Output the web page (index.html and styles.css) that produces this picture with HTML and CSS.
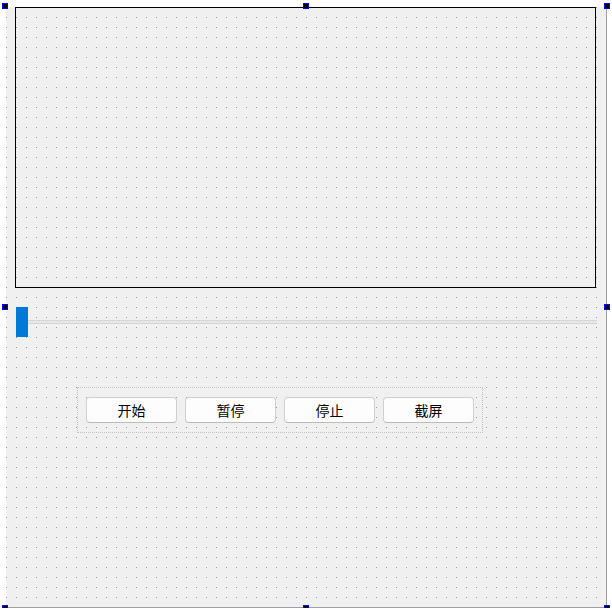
FILE: index.html
```html
<!DOCTYPE html>
<html>
<head>
<meta charset="utf-8">
<link rel="stylesheet" href="styles.css">
</head>
<body>
<div class="form">
  <div class="frame"></div>
  <div class="slider">
    <div class="groove"></div>
    <div class="knob"></div>
  </div>
  <div class="layout">
    <button class="btn">开始</button>
    <button class="btn">暂停</button>
    <button class="btn">停止</button>
    <button class="btn">截屏</button>
  </div>
  <span class="handle h-tl"></span>
  <span class="handle h-tm"></span>
  <span class="handle h-tr"></span>
  <span class="handle h-ml"></span>
  <span class="handle h-mr"></span>
  <span class="handle h-bl"></span>
  <span class="handle h-bm"></span>
  <span class="handle h-br"></span>
</div>
</body>
</html>
```
FILE: styles.css
```css
html, body {
  margin: 0;
  padding: 0;
  background: #ffffff;
}
body {
  font-family: "Noto Sans CJK SC", "Noto Sans", sans-serif;
}
.form {
  position: relative;
  margin: 7px 0 0 6px;
  width: 600px;
  height: 600px;
  background-color: #f0f0f0;
  background-image: conic-gradient(from 270deg at 1px 1px, #9c9c9c 25%, transparent 0);
  background-size: 10px 10px;
  border-right: 1px solid #a0a0a0;
  border-bottom: 1px solid #a0a0a0;
  display: flex;
  flex-direction: column;
  align-items: flex-start;
}
.frame {
  box-sizing: border-box;
  margin-left: 9px;
  width: 581px;
  height: 281px;
  border: 1px solid #000000;
}
.slider {
  position: relative;
  margin: 19px 0 0 10px;
  width: 581px;
  height: 30px;
  display: flex;
  align-items: center;
}
.groove {
  box-sizing: border-box;
  width: 100%;
  height: 4px;
  background: #e7e7e7;
  border-top: 1px solid #d6d6d6;
  border-bottom: 1px solid #d6d6d6;
}
.knob {
  position: absolute;
  left: 0;
  top: 0;
  width: 12px;
  height: 30px;
  background: #0078d7;
}
.layout {
  box-sizing: border-box;
  margin: 50px 0 0 71px;
  width: 406px;
  height: 46px;
  padding: 9px 8px 9px 8px;
  border: 1px dotted #c4c4c4;
  display: flex;
  gap: 8px;
}
.btn {
  box-sizing: border-box;
  width: 91px;
  height: 26px;
  margin: 0;
  padding: 0;
  background: #fdfdfd;
  border: 1px solid #d0d0d0;
  border-bottom-color: #bcbcbc;
  border-radius: 4px;
  font-family: "Noto Sans CJK SC", "Noto Sans", sans-serif;
  font-size: 14px;
  color: #000000;
  line-height: 24px;
}
.handle {
  position: absolute;
  box-sizing: border-box;
  width: 6px;
  height: 6px;
  background: #000000;
  border: 1px solid #0000ff;
}
.h-tl { left: -4px; top: -4px; }
.h-tm { left: 297px; top: -4px; }
.h-tr { left: 598px; top: -4px; }
.h-ml { left: -4px; top: 297px; }
.h-mr { left: 598px; top: 297px; }
.h-bl { left: -4px; top: 598px; }
.h-bm { left: 297px; top: 598px; }
.h-br { left: 598px; top: 598px; }
```
